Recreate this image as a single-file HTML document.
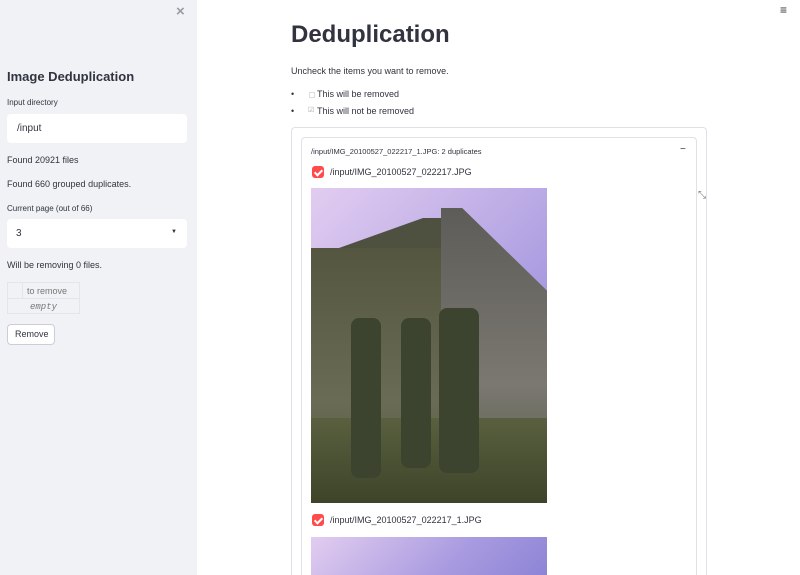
<!DOCTYPE html>
<html style="overflow:hidden;width:800px;height:575px"><head><style>
*{box-sizing:border-box;margin:0;padding:0}
body{width:800px;height:575px;overflow:hidden;background:#fff;font-family:"Liberation Sans",sans-serif;color:#31333f;position:relative}
.sb{position:absolute;left:0;top:0;width:197px;height:575px;background:#f0f2f6}
.t{position:absolute;white-space:nowrap}
.box{position:absolute;background:#fff;border-radius:4px}
.cb{position:absolute;width:12px;height:12px;background:#ff4b4b;border-radius:3px}
.cb:after{content:"";position:absolute;left:4px;top:1.5px;width:3px;height:6px;border:solid #fff;border-width:0 2px 2px 0;transform:rotate(45deg)}
.img{position:absolute;left:311px;width:236px;overflow:hidden;background:linear-gradient(135deg,#e2cdf0,#a99be0 60%,#8c84d6)}
.img .b1{position:absolute;left:0;top:60px;width:140px;height:255px;background:linear-gradient(180deg,#54563f,#6a6b55 60%,#4e5638)}
.img .b2{position:absolute;left:130px;top:20px;width:106px;height:295px;background:linear-gradient(180deg,#5e5c58,#7a7870 60%,#555a44);clip-path:polygon(0 0,20% 0,100% 28%,100% 100%,0 100%)}
.img .b0{position:absolute;left:0;top:30px;width:160px;height:40px;background:#4e5040;clip-path:polygon(0 100%,70% 0,100% 0,100% 100%)}
.img .g{position:absolute;left:0;bottom:0;width:100%;height:85px;background:linear-gradient(180deg,#59603f,#3d4429)}
.img .p{position:absolute;background:#3c4430;border-radius:8px}
</style></head><body>
<div class="sb"></div>
<div class="t" style="left:176px;top:3px;font-size:15px;color:#9a9ca5;font-weight:bold">×</div>
<div class="t" style="left:7px;top:69px;font-size:13px;font-weight:bold">Image Deduplication</div>
<div class="t" style="left:7px;top:98px;font-size:8px">Input directory</div>
<div class="box" style="left:7px;top:114px;width:180px;height:29px"></div>
<div class="t" style="left:17px;top:123px;font-size:10px">/input</div>
<div class="t" style="left:7px;top:155px;font-size:9px">Found 20921 files</div>
<div class="t" style="left:7px;top:179px;font-size:9px">Found 660 grouped duplicates.</div>
<div class="t" style="left:7px;top:204px;font-size:8px">Current page (out of 66)</div>
<div class="box" style="left:7px;top:219px;width:180px;height:29px"></div>
<div class="t" style="left:16px;top:228px;font-size:10px">3</div>
<div class="t" style="left:171px;top:229px;font-size:6px">▼</div>
<div class="t" style="left:7px;top:260px;font-size:9px">Will be removing 0 files.</div>
<div style="position:absolute;left:7px;top:282px;width:73px;height:32px;border:1px solid #e4e5ea"></div>
<div style="position:absolute;left:22px;top:282px;width:1px;height:16px;background:#e4e5ea"></div>
<div style="position:absolute;left:7px;top:298px;width:73px;height:1px;background:#e4e5ea"></div>
<div class="t" style="left:27px;top:286px;font-size:9px;color:#777">to remove</div>
<div class="t" style="left:30px;top:302px;font-size:9px;color:#777;font-family:'Liberation Mono',monospace;font-style:italic">empty</div>
<div class="box" style="left:7px;top:324px;width:48px;height:21px;border:1px solid #ccd;"></div>
<div class="t" style="left:15px;top:329px;font-size:9px">Remove</div>

<div class="t" style="left:780px;top:3px;font-size:12px">≡</div>
<div class="t" style="left:291px;top:21px;font-size:24px;font-weight:bold">Deduplication</div>
<div class="t" style="left:291px;top:66px;font-size:9px">Uncheck the items you want to remove.</div>
<div class="t" style="left:291px;top:89px;font-size:9px">•</div>
<div style="position:absolute;left:309px;top:92px;width:6px;height:6px;border:1px solid #ddd"></div>
<div class="t" style="left:317px;top:89px;font-size:9px">This will be removed</div>
<div class="t" style="left:291px;top:106px;font-size:9px">•</div>
<div class="t" style="left:308px;top:106px;font-size:7px;color:#aaa">☑</div>
<div class="t" style="left:317px;top:106px;font-size:9px">This will not be removed</div>
<div style="position:absolute;left:291px;top:127px;width:416px;height:448px;border:1px solid #e0e1e6;border-bottom:none;border-radius:4px 4px 0 0"></div>
<div style="position:absolute;left:301px;top:137px;width:396px;height:438px;border:1px solid #e0e1e6;border-bottom:none;border-radius:4px 4px 0 0"></div>
<div class="t" style="left:311px;top:147px;font-size:7.5px">/input/IMG_20100527_022217_1.JPG: 2 duplicates</div>
<div class="t" style="left:680px;top:144px;font-size:10px">−</div>
<div class="cb" style="left:312px;top:166px"></div>
<div class="t" style="left:330px;top:167px;font-size:9px">/input/IMG_20100527_022217.JPG</div>
<div class="img" style="top:188px;height:315px"><div class="b0"></div><div class="b1"></div><div class="b2"></div><div class="g"></div>
<div class="p" style="left:40px;top:130px;width:30px;height:160px"></div><div class="p" style="left:90px;top:130px;width:30px;height:150px"></div><div class="p" style="left:128px;top:120px;width:40px;height:165px"></div></div>
<div class="t" style="left:698px;top:190px;font-size:10px;color:#777">⤡</div>
<div class="cb" style="left:312px;top:514px"></div>
<div class="t" style="left:330px;top:515px;font-size:9px">/input/IMG_20100527_022217_1.JPG</div>
<div class="img" style="top:537px;height:38px"></div>
</body></html>
